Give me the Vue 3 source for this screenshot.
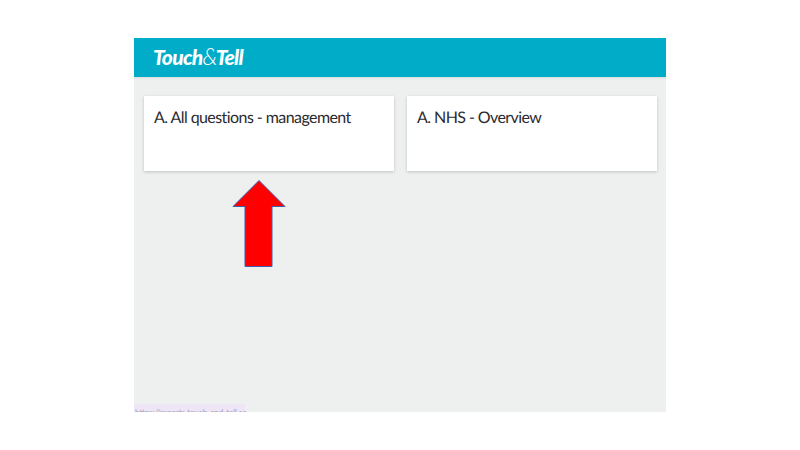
<template>
  <div class="page">
    <div class="screen">
      <header class="topbar">
        <div class="logo">Touch<span class="amp">&amp;</span>Tell</div>
      </header>

      <main class="cards">
        <div class="card" v-for="report in reports" :key="report">{{ report }}</div>
      </main>

      <svg class="arrow" width="55" height="88" viewBox="0 0 55 88">
        <path d="M27 0.5 L53 26.5 L40 26.5 L40 86.5 L13 86.5 L13 26.5 L1 26.5 Z" fill="#ff0000" stroke="#3a5fb0" stroke-width="1" />
      </svg>

      <div class="status">https://reports.touch-and-tell.se</div>
    </div>
  </div>
</template>

<script setup>
const reports = ["A. All questions - management", "A. NHS - Overview"];
</script>

<style>
html,
body {
  margin: 0;
  background: #fff;
}
</style>

<style scoped>
.page {
  width: 800px;
  height: 450px;
  padding: 38px 134px;
  box-sizing: border-box;
  font-family: Lato, "Liberation Sans", sans-serif;
}

.screen {
  position: relative;
  width: 532px;
  height: 374px;
  background: #eef0f0;
  overflow: hidden;
}

.topbar {
  height: 39px;
  padding-left: 20px;
  display: flex;
  align-items: center;
  background: #00acc8;
  box-shadow: 0 1px 2px rgba(0, 0, 0, 0.08);
}

.logo {
  color: #fff;
  font-size: 21px;
  font-weight: 900;
  font-style: italic;
  letter-spacing: -0.7px;
  margin-top: -2px;
  margin-left: -1px;
}

.amp {
  font-weight: 300;
  font-size: 23px;
  line-height: 1;
  margin-right: -1px;
}

.cards {
  display: flex;
  gap: 13px;
  padding: 19px 0 0 10px;
}

.card {
  width: 250px;
  height: 75px;
  padding: 12px 10px;
  box-sizing: border-box;
  background: #fff;
  color: #2b2b2f;
  font-size: 16px;
  line-height: 19px;
  letter-spacing: -0.57px;
  text-rendering: geometricPrecision;
  box-shadow: 0 1px 3px rgba(0, 0, 0, 0.2);
}

.arrow {
  position: absolute;
  left: 98px;
  top: 142px;
}

.status {
  position: absolute;
  left: 1px;
  top: 366px;
  width: 110px;
  height: 14px;
  padding-top: 3px;
  box-sizing: border-box;
  background: #eee6f6;
  color: #a59cb2;
  font-size: 8px;
  line-height: 10px;
  white-space: nowrap;
  box-shadow: -1px 0 0 #eee6f6;
}
</style>
